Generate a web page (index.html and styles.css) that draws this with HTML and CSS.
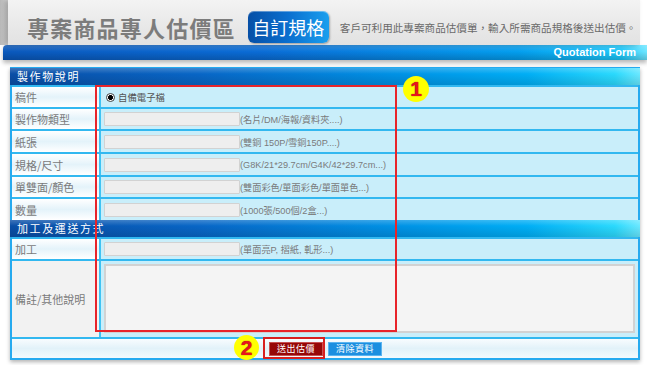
FILE: index.html
```html
<!DOCTYPE html>
<html lang="zh-Hant">
<head>
<meta charset="utf-8">
<title>專案商品專人估價區</title>
<link rel="stylesheet" href="styles.css">
</head>
<body>
<div class="page">
  <header class="top">
    <div class="top-panel">
      <h1 class="title">專案商品專人估價區</h1>
      <span class="badge">自訂規格</span>
      <p class="desc">客戶可利用此專案商品估價單，輸入所需商品規格後送出估價。</p>
    </div>
  </header>
  <div class="bar"><span class="bar-text">Quotation Form</span></div>

  <div class="form">
    <div class="section">製作物說明</div>
    <div class="row r22">
      <div class="label">稿件</div>
      <div class="value"><span class="radio"></span><span class="radio-text">自備電子檔</span></div>
    </div>
    <div class="row r22">
      <div class="label">製作物類型</div>
      <div class="value"><span class="input"></span><span class="hint">(名片/DM/海報/資料夾....)</span></div>
    </div>
    <div class="row r23">
      <div class="label">紙張</div>
      <div class="value"><span class="input"></span><span class="hint">(雙銅 150P/雪銅150P....)</span></div>
    </div>
    <div class="row r23">
      <div class="label">規格/尺寸</div>
      <div class="value"><span class="input"></span><span class="hint">(G8K/21*29.7cm/G4K/42*29.7cm...)</span></div>
    </div>
    <div class="row r22">
      <div class="label">單雙面/顏色</div>
      <div class="value"><span class="input"></span><span class="hint">(雙面彩色/單面彩色/單面單色...)</span></div>
    </div>
    <div class="row r23">
      <div class="label">數量</div>
      <div class="value"><span class="input"></span><span class="hint">(1000張/500個/2盒...)</span></div>
    </div>
    <div class="section">加工及運送方式</div>
    <div class="row r22 first">
      <div class="label">加工</div>
      <div class="value"><span class="input"></span><span class="hint">(單面亮P, 摺紙, 軋形...)</span></div>
    </div>
    <div class="row rtall">
      <div class="label grey">備註/其他說明</div>
      <div class="value tall"><span class="textarea"></span></div>
    </div>
    <div class="buttons">
      <span class="btn submit">送出估價</span>
      <span class="btn clear">清除資料</span>
    </div>
  </div>

  <div class="mark box1"></div>
  <div class="mark dot dot1">1</div>
  <div class="mark box2"></div>
  <div class="mark dot dot2">2</div>
</div>
</body>
</html>
```

FILE: styles.css
```css
* { box-sizing: border-box; }

html, body {
  margin: 0;
  padding: 0;
  background: #ffffff;
}

body {
  width: 647px;
  height: 365px;
  overflow: hidden;
  font-family: "Liberation Sans", "Noto Sans CJK TC", sans-serif;
}

.page {
  position: relative;
  width: 647px;
  height: 365px;
}

/* ---------- header ---------- */
.top {
  height: 45px;
  display: flex;
  padding-left: 8px;
  padding-right: 7px;
  background: linear-gradient(to right, #b9b9b9 0px, #d8d8d8 8px, #ffffff 8px);
}

.top-panel {
  flex: 1;
  display: flex;
  align-items: center;
  padding-top: 9px;
  padding-left: 19px;
  background: linear-gradient(to bottom, #f3f3f3 0%, #e8e8e8 60%, #e2e2e2 100%);
  box-shadow: -3px 0 5px rgba(0, 0, 0, 0.25);
}

.title {
  margin: 0;
  font-family: "Noto Sans CJK TC", sans-serif;
  font-size: 22px;
  font-weight: 700;
  letter-spacing: 1.2px;
  color: #7c7c7c;
  line-height: 30px;
}

.badge {
  margin-left: 12px;
  height: 32px;
  width: 81px;
  display: flex;
  align-items: center;
  justify-content: center;
  border-radius: 6px;
  background: linear-gradient(to right, #064fa6 0%, #0a6fcf 50%, #1a9fee 100%);
  box-shadow: 1px 1px 2px rgba(0, 0, 0, 0.3), inset 0 1px 0 rgba(255, 255, 255, 0.35);
  color: #ffffff;
  font-family: "Noto Sans CJK TC", sans-serif;
  font-size: 18px;
  line-height: 32px;
}

.desc {
  margin: 0 0 0 11px;
  font-family: "Noto Sans CJK TC", sans-serif;
  font-size: 10.6px;
  color: #6a6a6a;
  white-space: nowrap;
}

/* ---------- blue bar ---------- */
.bar {
  margin-left: 3px;
  height: 15px;
  border-top-left-radius: 4px;
  display: flex;
  align-items: center;
  justify-content: flex-end;
  padding-right: 11px;
  background:
    linear-gradient(to bottom, rgba(255, 255, 255, 0.18) 0%, rgba(255, 255, 255, 0) 45%, rgba(0, 0, 0, 0.18) 100%),
    linear-gradient(to right, #0a58bc 0%, #0a6cd6 40%, #039eee 80%, #1cc8fb 96%, #6ee6ff 100%);
  box-shadow: 0 3px 4px rgba(0, 0, 0, 0.28);
}

.bar-text {
  color: #ffffff;
  font-size: 11px;
  font-weight: 700;
  line-height: 15px;
}

/* ---------- form ---------- */
.form {
  margin: 7px 7px 0 10px;
  border: 2px solid #26aaef;
  border-top-width: 1px;
  box-shadow: 0 2px 4px rgba(0, 0, 0, 0.3);
}

.section {
  height: 17px;
  margin: 0 -2px;
  padding-left: 7px;
  line-height: 17px;
  color: #ffffff;
  font-family: "Noto Sans CJK TC", sans-serif;
  font-size: 11px;
  letter-spacing: 1.6px;
  background:
    linear-gradient(to bottom, rgba(255, 255, 255, 0.22) 0%, rgba(255, 255, 255, 0) 35%, rgba(0, 0, 0, 0.12) 100%),
    linear-gradient(to right, #0a4ea6 0%, #0866c6 30%, #0090e4 60%, #00aef5 82%, #2ad9fd 96%, #6ae8ff 100%);
}

.row {
  display: grid;
  grid-template-columns: 87px 1fr;
  border-top: 2px solid #32b8f0;
}

.r22 { height: 22px; }
.r23 { height: 23px; }
.rtall { height: 78px; }

.label {
  display: flex;
  align-items: center;
  padding-left: 3px;
  font-family: "Noto Sans CJK TC", sans-serif;
  font-size: 11px;
  color: #7a7a7a;
  background: linear-gradient(to bottom, #ffffff 0%, #e4f3fa 50%, #ffffff 100%);
}

.label.grey {
  background: #f2f2f2;
}

.value {
  display: flex;
  align-items: center;
  padding-left: 3px;
  border-left: 2px solid #40c3f3;
  background: #c9eefa;
}

.value.tall {
  align-items: flex-start;
  padding: 3px 3px 0 3px;
}

.radio {
  width: 9px;
  height: 9px;
  margin-left: 2px;
  border-radius: 50%;
  border: 1px solid #444444;
  background: radial-gradient(circle, #000000 0 2.2px, #ffffff 2.6px);
}

.radio-text {
  margin-left: 3px;
  font-family: "Noto Sans CJK TC", sans-serif;
  font-size: 9.4px;
  color: #555555;
}

.input {
  width: 136px;
  height: 14px;
  border: 1px solid #d2d2d2;
  border-radius: 1px;
  background: #eeeeee;
}

.hint {
  font-size: 9.2px;
  color: #7a7a7a;
  white-space: nowrap;
}

.textarea {
  display: block;
  width: 100%;
  height: 69px;
  border: 2px solid #d2d2d2;
  background: #f4f4f4;
}

.buttons {
  height: 21px;
  border-top: 2px solid #32b8f0;
  display: flex;
  align-items: center;
  justify-content: center;
  gap: 5px;
  padding-left: 1px;
  background: linear-gradient(to bottom, #f8fcfe 0%, #e2f2f9 50%, #f3fafd 100%);
}

.btn {
  width: 54px;
  height: 14px;
  display: flex;
  align-items: center;
  justify-content: center;
  font-family: "Noto Sans CJK TC", sans-serif;
  font-size: 9px;
  letter-spacing: 0.5px;
  color: #ffffff;
}

.submit {
  background: #960808;
  border: 1px solid #c85050;
}

.clear {
  background: #1c8fe0;
  border: 1px solid #5ab4f0;
}

/* ---------- annotations (overlay) ---------- */
.mark {
  position: absolute;
}

.box1 {
  left: 95px;
  top: 85px;
  width: 302px;
  height: 247px;
  border: 2px solid #e8242a;
}

.box2 {
  left: 263px;
  top: 337px;
  width: 62px;
  height: 22px;
  border: 2px solid #d82020;
}

.dot {
  width: 26px;
  height: 26px;
  border-radius: 50%;
  background: #ffff00;
  color: #e8141c;
  font-family: "Liberation Sans", sans-serif;
  font-weight: 700;
  font-size: 21px;
  line-height: 26px;
  text-align: center;
  text-shadow: 0 0 1px #700000;
}

.dot1 {
  left: 403px;
  top: 76px;
}

.dot2 {
  left: 234px;
  top: 335px;
  width: 25px;
  height: 25px;
  line-height: 25px;
}
```
